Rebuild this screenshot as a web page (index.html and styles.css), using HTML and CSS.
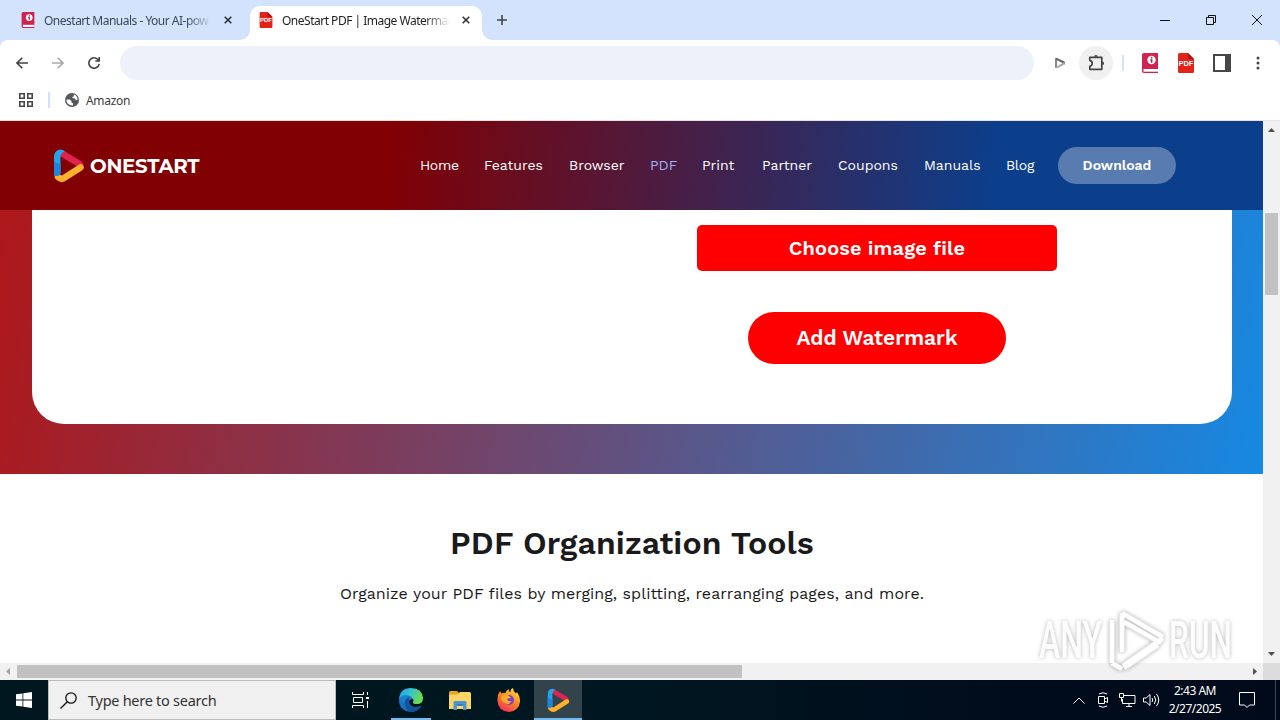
FILE: index.html
```html
<!DOCTYPE html>
<html lang="en">
<head>
  <meta charset="UTF-8">
  <meta name="viewport" content="width=device-width, initial-scale=1.0">
  <title>OneStart PDF | Image Watermark</title>
  <link rel="stylesheet" href="styles.css">
</head>
<body>
  <!-- shared icons -->
  <svg class="defs" width="0" height="0">
    <symbol id="manual" viewBox="0 0 16 20">
      <path fill="#cf2350" d="M2 0h14v20H2a2 2 0 0 1-2-2V2a2 2 0 0 1 2-2z"/>
      <path fill="#fff" d="M1.500 16h14.500v2.700H1.500z"/>
      <circle cx="9.500" cy="7" r="4.200" fill="#fff"/>
      <path fill="#b51f45" d="M8.800 4h1.600v1.500H8.800zM8.200 6.300h2.200v3.500H8.800V7.500h-.6z"/>
    </symbol>
    <symbol id="pdf" viewBox="0 0 16 20">
      <path fill="#e2231a" d="M1.500 0H10l6 6v12.500a1.500 1.500 0 0 1-1.500 1.500h-13A1.500 1.500 0 0 1 0 18.500v-17A1.500 1.500 0 0 1 1.500 0z"/>
      <path fill="#a81410" d="M10 0l6 6h-4.500A1.500 1.500 0 0 1 10 4.500z"/>
      <text x="8" y="13" text-anchor="middle" class="pdf-text">PDF</text>
    </symbol>
    <symbol id="onestart" viewBox="0 0 32 34">
      <path d="M9 4.500L25 14q5 3 0 6" fill="none" stroke="#e0244f" stroke-width="6.500" stroke-linecap="round"/>
      <path d="M27.500 18.500L11 29q-3 2-6-1" fill="none" stroke="#fdb02c" stroke-width="6.500" stroke-linecap="round"/>
      <path d="M1 27V8q0-5 4-7Q9-.5 12 2.500q-4.500 1-4.500 6V24q0 2-3 3z" fill="#22a3ea"/>
      <path d="M1 12q3 4 6.500 3v9q0 2-3 3H1z" fill="#1c86dd"/>
    </symbol>
  </svg>

  <div class="tabs">
    <div class="tab">
      <svg class="favicon" width="14" height="16"><use href="#manual"/></svg>
      <span class="tab-title">Onestart Manuals - Your AI-pow</span>
      <svg class="close" width="8" height="8" viewBox="0 0 8 8"><path d="M.7.700l6.600 6.600M7.300.700L.700 7.300"/></svg>
    </div>
    <div class="tab active">
      <svg class="favicon" width="14" height="16"><use href="#pdf"/></svg>
      <span class="tab-title">OneStart PDF | Image Watermar</span>
      <svg class="close" width="8" height="8" viewBox="0 0 8 8"><path d="M.7.700l6.600 6.600M7.300.700L.700 7.300"/></svg>
    </div>
    <svg class="new-tab" width="10" height="10" viewBox="0 0 10 10"><path d="M5 0v10M0 5h10"/></svg>
    <div class="window-buttons">
      <svg width="10" height="10" viewBox="0 0 10 10"><path d="M0 5.500h10"/></svg>
      <svg width="10" height="10" viewBox="0 0 10 10"><path d="M.5 2.500h7v7h-7zM2.500 2.500v-2h7v7h-2"/></svg>
      <svg width="10" height="10" viewBox="0 0 10 10"><path d="M0 0l10 10M10 0L0 10"/></svg>
    </div>
  </div>

  <div class="toolbar">
    <div class="nav-icons">
      <svg width="12" height="12" viewBox="0 0 12 12"><path d="M12 6H1M6.300.700L1 6l5.300 5.300"/></svg>
      <svg class="off" width="12" height="12" viewBox="0 0 12 12"><path d="M0 6h11M5.700.700L11 6l-5.300 5.300"/></svg>
      <svg width="12" height="12" viewBox="0 0 12 12"><path d="M10.300 3A5.200 5.200 0 1 0 11.200 6.800M11.200 0v4H7.300"/></svg>
    </div>
    <div class="address"></div>
    <div class="extensions">
      <svg width="12" height="12" viewBox="0 0 12 12" fill="none" stroke-width="2" stroke-linecap="round" stroke-linejoin="round"><path d="M2 10V2" stroke="#8a8a8a"/><path d="M2.500 1.800L10 5.500v1" stroke="#666"/><path d="M10 6.500L3 10.300" stroke="#aaa"/></svg>
      <span class="puzzle">
        <svg width="18" height="18" viewBox="0 0 18 18"><path d="M2.800 3.300h12v12h-12v-3q2.400-.5 2.400-3t-2.400-3z" fill="none" stroke="#444" stroke-width="1.700" stroke-linejoin="round"/><path d="M7 2.800a1.900 1.900 0 0 1 3.800 0zM15.200 7.400a1.900 1.900 0 0 1 0 3.800z" fill="#444"/></svg>
      </span>
      <i class="divider"></i>
      <svg width="16" height="20"><use href="#manual"/></svg>
      <svg width="16" height="20"><use href="#pdf"/></svg>
      <svg width="18" height="18" viewBox="0 0 18 18"><path d="M1 1h16v16H1z" fill="#fff" stroke="#474747" stroke-width="2"/><path d="M12 0h6v18h-6z" fill="#474747"/></svg>
      <svg width="4" height="14" viewBox="0 0 4 14" fill="#444"><circle cx="2" cy="2" r="1.500"/><circle cx="2" cy="7" r="1.500"/><circle cx="2" cy="12" r="1.500"/></svg>
    </div>
  </div>

  <div class="bookmarks">
    <svg width="14" height="14" viewBox="0 0 14 14"><path d="M.8.800h4.400v4.400H.8zM8.800.800h4.400v4.400H8.800zM.8 8.800h4.400v4.400H.8zM8.800 8.800h4.400v4.400H8.800z" fill="none" stroke="#474747" stroke-width="1.600"/></svg>
    <i class="divider"></i>
    <svg width="14" height="14" viewBox="0 0 14 14"><circle cx="7" cy="7" r="7" fill="#54575b"/><path d="M1.500 6.500h3.300l1.700 1.700v1.500l1.500.5v2.300Q3 12.500 1.500 8.500zM7 1.500h1.800v1.700L7.500 4v1.300h2.300l1 1.700 1.700.3Q12.800 2.800 9 1.500z" fill="#fff"/></svg>
    <span>Amazon</span>
  </div>

  <div class="viewport">
    <div class="page">
      <header class="header">
        <div class="logo">
          <svg width="32" height="34"><use href="#onestart"/></svg>
          <span>ONESTART</span>
        </div>
        <nav class="menu">
          <a class="w-home">Home</a>
          <a class="w-features">Features</a>
          <a class="w-browser">Browser</a>
          <a class="w-pdf current">PDF</a>
          <a class="w-print">Print</a>
          <a class="w-partner">Partner</a>
          <a class="w-coupons">Coupons</a>
          <a class="w-manuals">Manuals</a>
          <a class="w-blog">Blog</a>
          <a class="download">Download</a>
        </nav>
      </header>
      <section class="hero">
        <div class="card">
          <div class="form">
            <button class="choose">Choose image file</button>
            <button class="add">Add Watermark</button>
          </div>
        </div>
      </section>
      <section class="tools">
        <h2>PDF Organization Tools</h2>
        <p>Organize your PDF files by merging, splitting, rearranging pages, and more.</p>
      </section>
    </div>
    <div class="scroll-y">
      <svg width="7" height="4"><path d="M0 4l3.500-4L7 4z"/></svg>
      <div class="thumb-y"></div>
      <svg width="7" height="4"><path d="M0 0l3.500 4L7 0z"/></svg>
    </div>
    <div class="scroll-x">
      <svg width="4" height="7"><path class="dim" d="M4 0L0 3.500 4 7z"/></svg>
      <div class="thumb-x"></div>
      <svg width="4" height="7"><path d="M0 0l4 3.500L0 7z"/></svg>
    </div>
    <div class="corner"></div>
  </div>

  <svg class="watermark" width="204" height="66" viewBox="0 0 204 66">
    <text x="3" y="50" textLength="63" lengthAdjust="spacingAndGlyphs">ANY</text>
    <path d="M76 55V12M86 5v39M86 5l41 24M88 14l37 21M127 30L87 58M122 37L88 60M76 55l10 6" />
    <path class="face" d="M76 55V12M86 5v39M86 5l41 24M88 14l37 21M127 30L87 58M122 37L88 60M76 55l10 6" />
    <text x="133" y="50" textLength="63" lengthAdjust="spacingAndGlyphs">RUN</text>
  </svg>

  <div class="taskbar">
    <div class="start">
      <svg width="16" height="16" viewBox="0 0 16 16" fill="#fff"><path d="M0 2.300L6.500 1.400v6.200H0zM7.300 1.300L16 0v7.600H7.300zM0 8.400h6.500v6.200L0 13.700zM7.300 8.400H16V16l-8.700-1.300z"/></svg>
    </div>
    <div class="search">
      <svg width="17" height="17" viewBox="0 0 17 17" fill="none" stroke="#111" stroke-width="1.300"><circle cx="11" cy="6" r="5.200"/><path d="M7.300 9.700L.5 16.500"/></svg>
      <span>Type here to search</span>
    </div>
    <div class="app task-view">
      <svg width="17" height="16" viewBox="0 0 17 16" fill="none" stroke="#fff"><path d="M.5 0v2.500h11V0M.5 16v-2.500h11V16M1.500 5.500h9v5h-9zM15.500 0v3M15.500 9v7"/><path d="M14 5h3v2h-3z" fill="#fff" stroke="none"/></svg>
    </div>
    <div class="app open">
      <svg width="24" height="24" viewBox="0 0 24 24">
        <defs>
          <linearGradient id="edge1" x1="0" y1="0" x2="1" y2=".4"><stop offset="0" stop-color="#1b9de2"/><stop offset=".5" stop-color="#35c1d0"/><stop offset="1" stop-color="#6bdd4f"/></linearGradient>
          <linearGradient id="edge2" x1="0" y1="0" x2="0" y2="1"><stop offset="0" stop-color="#1b87d8"/><stop offset="1" stop-color="#1464b4"/></linearGradient>
        </defs>
        <path fill="url(#edge2)" d="M0 12Q0 5 8 6q6 1 6 5-4 0-4 3 1 5 7 5 3 0 5.500-1.500Q19 24 12 24 0 23 0 12z"/>
        <path fill="#155196" d="M10 9Q5 11 6 17q1 5 6 7 7 0 10.500-6.500Q20 19 17 19q-7 0-7-5z"/>
        <path fill="url(#edge1)" d="M0 11Q1 0 12 0q11 0 12 10 0 6-6 6-5 0-4-2 1-1 0-3-2-4-7-4-5 0-7 4z"/>
      </svg>
    </div>
    <div class="app">
      <svg width="22" height="19" viewBox="0 0 22 19">
        <path fill="#eca51c" d="M0 1.500Q0 0 1.500 0H8l2 2v2H0z"/>
        <path fill="#fbd667" d="M0 3.500h8.500L11 1h9.500Q22 1 22 2.500V18H0z"/>
        <path fill="#4a96d2" d="M5.500 10h11l1 1v8H14v-4H8v4H4.500v-8z"/>
        <path fill="#3478b4" d="M8 13h6v1.500H8z"/>
      </svg>
    </div>
    <div class="app">
      <svg width="24" height="24" viewBox="0 0 24 24">
        <defs>
          <linearGradient id="fox" x1=".8" y1="0" x2=".2" y2="1"><stop offset="0" stop-color="#ffe13c"/><stop offset=".45" stop-color="#ff8a1e"/><stop offset="1" stop-color="#f5285f"/></linearGradient>
        </defs>
        <path fill="url(#fox)" d="M3 3l1.500 2.500q2-1 4-.5 1-3 3-4 0 3 2 3.500Q13 1 16 0q0 3 3 5.500L20 4q3.500 5 3 9.500Q22 23 12 24 1 23 .5 13 0 7 3 3z"/>
        <circle cx="12" cy="12" r="5" fill="#7b3fd4"/>
        <path fill="#ffab29" d="M4 9q4-4 8-1l2 2q-3 0-4 1.500 1 2.500 4.500 1.500Q12 18 8 15q-4-2-4-6z"/>
      </svg>
    </div>
    <div class="app open focused">
      <svg width="23" height="25"><use href="#onestart"/></svg>
    </div>
    <div class="tray">
      <svg width="12" height="7" viewBox="0 0 12 7"><path d="M.5 6.500L6 1l5.500 5.500"/></svg>
      <svg width="12" height="16" viewBox="0 0 12 16"><path d="M1.500 4.500h6v7h-6zM7.500 7l3-1.500v5l-3-1.500M2 2q4-2.500 8 0M2 14q4 2.500 8 0"/></svg>
      <svg width="17" height="14" viewBox="0 0 17 14"><path d="M5 2.500h11v8H3.500V6M7 13.500h6M10 10.500v3M.5.500h4v4h-4zM2.500 4.500v4"/></svg>
      <svg width="17" height="14" viewBox="0 0 17 14"><path d="M.5 5h2.700L7 1.500v11L3.200 9H.5zM9 5q1.500 2 0 4M11.300 3q3 4 0 8M13.500 1q4.500 6 0 12"/></svg>
      <div class="clock">
        <span class="time">2:43 AM</span>
        <span class="date">2/27/2025</span>
      </div>
      <svg width="16" height="16" viewBox="0 0 16 16"><path d="M.5.500h15v12.500h-5L8 15.500 5.500 13h-5z"/></svg>
      <i class="desktop-edge"></i>
    </div>
  </div>
</body>
</html>
```
FILE: styles.css
```css
* {
  box-sizing: border-box;
}
body {
  margin: 0;
  width: 1280px;
  height: 720px;
  overflow: hidden;
  position: relative;
  display: flex;
  flex-direction: column;
  background-color: #fff;
  font-family: "Noto Sans", sans-serif;
}
svg {
  display: block;
  flex: none;
}
.defs {
  position: absolute;
}
.pdf-text {
  font: bold 7.4px "Liberation Sans", sans-serif;
  fill: #fff;
}

/* tabs */
.tabs {
  height: 40px;
  display: flex;
  align-items: center;
  background-color: #d3e3fd;
  font-size: 12px;
}
.tab {
  display: flex;
  align-items: center;
  width: 250px;
  height: 40px;
  padding-left: 21px;
  color: #3c4654;
}
.tab.active {
  align-self: flex-end;
  position: relative;
  width: 232px;
  height: 34px;
  padding: 0 0 6px 9px;
  border-radius: 10px 10px 0 0;
  background-color: #fff;
  color: #1f1f1f;
}
.tab.active::before,
.tab.active::after {
  content: "";
  position: absolute;
  bottom: 0;
  width: 10px;
  height: 10px;
}
.tab.active::before {
  left: -10px;
  background: radial-gradient(circle at 0 0, transparent 9.5px, #fff 10px);
}
.tab.active::after {
  right: -10px;
  background: radial-gradient(circle at 100% 0, transparent 9.5px, #fff 10px);
}
.tab-title {
  width: 168px;
  margin-left: 9px;
  margin-right: -2px;
  white-space: nowrap;
  letter-spacing: -0.5px;
  mask-image: linear-gradient(to right, #000 85%, transparent);
}
.close {
  margin-left: 14px;
  fill: none;
  stroke: #333;
  stroke-width: 1.6;
}
.new-tab {
  margin-left: 15px;
  stroke: #444;
  stroke-width: 1.6;
}
.window-buttons {
  display: flex;
  gap: 36px;
  margin-left: auto;
  margin-right: 18px;
  fill: none;
  stroke: #111;
}

/* toolbar */
.toolbar {
  height: 46px;
  display: flex;
  align-items: center;
  background: linear-gradient(#d3e3fd, #d3e3fd) 0 0 / 100% 10px no-repeat;
  position: relative;
}
.toolbar::before {
  content: "";
  position: absolute;
  inset: 0;
  border-radius: 8px 8px 0 0;
  background-color: #fff;
}
.toolbar > * {
  position: relative;
}
.nav-icons {
  display: flex;
  gap: 24px;
  width: 120px;
  padding-left: 16px;
  fill: none;
  stroke: #444;
  stroke-width: 1.6;
}
.off {
  stroke: #aaa;
}
.address {
  width: 914px;
  height: 34px;
  border-radius: 17px;
  background-color: #ecf1fa;
}
.extensions {
  display: flex;
  align-items: center;
  margin-left: 20px;
}
.puzzle {
  display: flex;
  align-items: center;
  justify-content: center;
  width: 34px;
  height: 34px;
  margin-left: 13px;
  border-radius: 50%;
  background-color: #f0f0f1;
}
.divider {
  width: 2px;
  height: 16px;
  background-color: #d3e3fd;
}
.extensions .divider {
  margin: 0 18px 0 9px;
}
.extensions > svg + svg {
  margin-left: 20px;
}
.extensions > svg:nth-of-type(4) {
  margin-left: 19px;
}
.extensions > svg:last-child {
  margin-left: 25px;
}

/* bookmarks */
.bookmarks {
  height: 35px;
  display: flex;
  align-items: center;
  padding: 0 0 6px 19px;
  border-bottom: 1px solid #ecdfe2;
  color: #3c3c3c;
  font-size: 12px;
}
.bookmarks .divider {
  margin: 0 15px;
}
.bookmarks span {
  margin-left: 7px;
  letter-spacing: -0.3px;
}

/* page */
.viewport {
  height: 559px;
  display: grid;
  grid-template: 542px 17px / 1263px 17px;
}
.page {
  overflow: hidden;
  font-family: "Work Sans", Inter, sans-serif;
}
.header {
  height: 89px;
  display: flex;
  align-items: center;
  background: linear-gradient(95deg, #800004 31%, #0b3f8c 79%);
}
.logo {
  display: flex;
  align-items: center;
  width: 420px;
  padding-left: 53px;
}
.logo span {
  margin-left: 5px;
  color: #fff;
  font: bold 19.8px Montserrat, Inter, sans-serif;
  letter-spacing: -0.3px;
}
.menu {
  display: flex;
  align-items: center;
  color: #fff;
  font-size: 14px;
  white-space: nowrap;
}
.menu a {
  height: 37px;
  line-height: 36px;
}
.w-home { width: 64px; }
.w-features { width: 85px; }
.w-browser { width: 81px; }
.w-pdf { width: 52px; }
.w-print { width: 60px; }
.w-partner { width: 76px; }
.w-coupons { width: 86px; }
.w-manuals { width: 82px; }
.w-blog { width: 52px; }
.w-home,
.w-blog {
  letter-spacing: -0.3px;
}
.current {
  color: #9fb4ee;
}
.download {
  width: 118px;
  border-radius: 19px;
  background-color: #587bb0;
  font-weight: 600;
  text-align: center;
}
.hero {
  height: 264px;
  padding: 0 31px 50px 32px;
  background: linear-gradient(100deg, #ae171a, #1689e2);
}
.card {
  height: 214px;
  display: grid;
  grid-template-columns: 600px 490px;
  border-radius: 0 0 32px 32px;
  background-color: #fff;
}
.form {
  grid-column: 2;
  display: flex;
  flex-direction: column;
  align-items: center;
  padding-top: 15px;
  gap: 41px;
}
.form button {
  padding: 0;
  border: 0;
  background-color: #f00;
  color: #fff;
  font-family: inherit;
  font-size: 20px;
  font-weight: 600;
}
.form .choose {
  width: 360px;
  height: 46px;
  border-radius: 5px;
  letter-spacing: 0.1px;
}
.form .add {
  width: 258px;
  height: 52px;
  padding-bottom: 2px;
  border-radius: 26px;
  font-size: 21px;
}
.tools {
  padding: 49px 0 0 1px;
  color: #1a1a1a;
  text-align: center;
}
.tools h2 {
  margin: 0;
  font-size: 32px;
  font-weight: 600;
  line-height: 40px;
  letter-spacing: 0.08px;
}
.tools p {
  margin: 20px 0 0;
  font-size: 16px;
  line-height: 22px;
  letter-spacing: 0.05px;
}

/* scrollbars */
.scroll-y,
.scroll-x {
  display: flex;
  align-items: center;
  background-color: #f1f1f1;
  fill: #505050;
}
.scroll-y {
  flex-direction: column;
  padding: 7px 0;
}
.scroll-y svg:last-child {
  margin-top: auto;
}
.thumb-y {
  width: 13px;
  height: 82px;
  margin-top: 81px;
  background-color: #c1c1c1;
}
.scroll-x {
  padding: 0 6px;
}
.scroll-x svg:last-child {
  margin-left: auto;
}
.dim {
  fill: #a3a3a3;
}
.thumb-x {
  width: 725px;
  height: 13px;
  margin-left: 7px;
  background-color: #c1c1c1;
}
.corner {
  background-color: #dcdcdc;
}

/* overlay mark */
.watermark {
  position: absolute;
  left: 1036px;
  top: 608px;
  filter: drop-shadow(0 0 2px rgba(0, 0, 0, 0.4));
  fill: rgba(255, 255, 255, 0.95);
  opacity: 0.75;
}
.watermark text {
  font: 500 52px Roboto, sans-serif;
}
.watermark path {
  fill: none;
  stroke: #ddd;
  stroke-width: 6;
  stroke-linejoin: round;
}
.watermark .face {
  stroke: #fff;
  stroke-width: 4;
}

/* taskbar */
.taskbar {
  height: 40px;
  display: flex;
  background: linear-gradient(to right, #00171f, #001620 50%, #000c1c 80%, #000a1a);
}
.start,
.app {
  width: 48px;
  display: flex;
  align-items: center;
  justify-content: center;
}
.search {
  width: 288px;
  display: flex;
  align-items: center;
  padding-left: 11px;
  border: 1px solid #bbb;
  background-color: #f0f0f0;
  color: #333;
  font-size: 14.5px;
}
.search span {
  margin-left: 11px;
  letter-spacing: -0.27px;
}
.app {
  width: 49px;
}
.task-view {
  width: 50px;
  padding-right: 2px;
}
.open {
  background: linear-gradient(#76b9ed, #76b9ed) 50% 100% / 40px 2px no-repeat;
}
.focused {
  width: 48px;
  margin-left: 1px;
  background: linear-gradient(#76b9ed, #76b9ed) 50% 100% / 48px 2px no-repeat #33434b;
}
.tray {
  display: flex;
  align-items: center;
  margin-left: auto;
  fill: none;
  stroke: #fff;
}
.tray svg + svg {
  margin-left: 10px;
}
.tray svg:nth-of-type(2) {
  margin-left: 12px;
}
.tray svg:nth-of-type(4) {
  margin-left: 7px;
}
.clock {
  display: flex;
  flex-direction: column;
  align-items: center;
  width: 70px;
  margin: 0 9px 0 0;
  color: #fff;
  font-size: 12px;
  line-height: 18px;
  letter-spacing: -0.5px;
}
.desktop-edge {
  width: 1px;
  height: 40px;
  margin: 0 4px 0 20px;
  background-color: #3a4350;
}
```
